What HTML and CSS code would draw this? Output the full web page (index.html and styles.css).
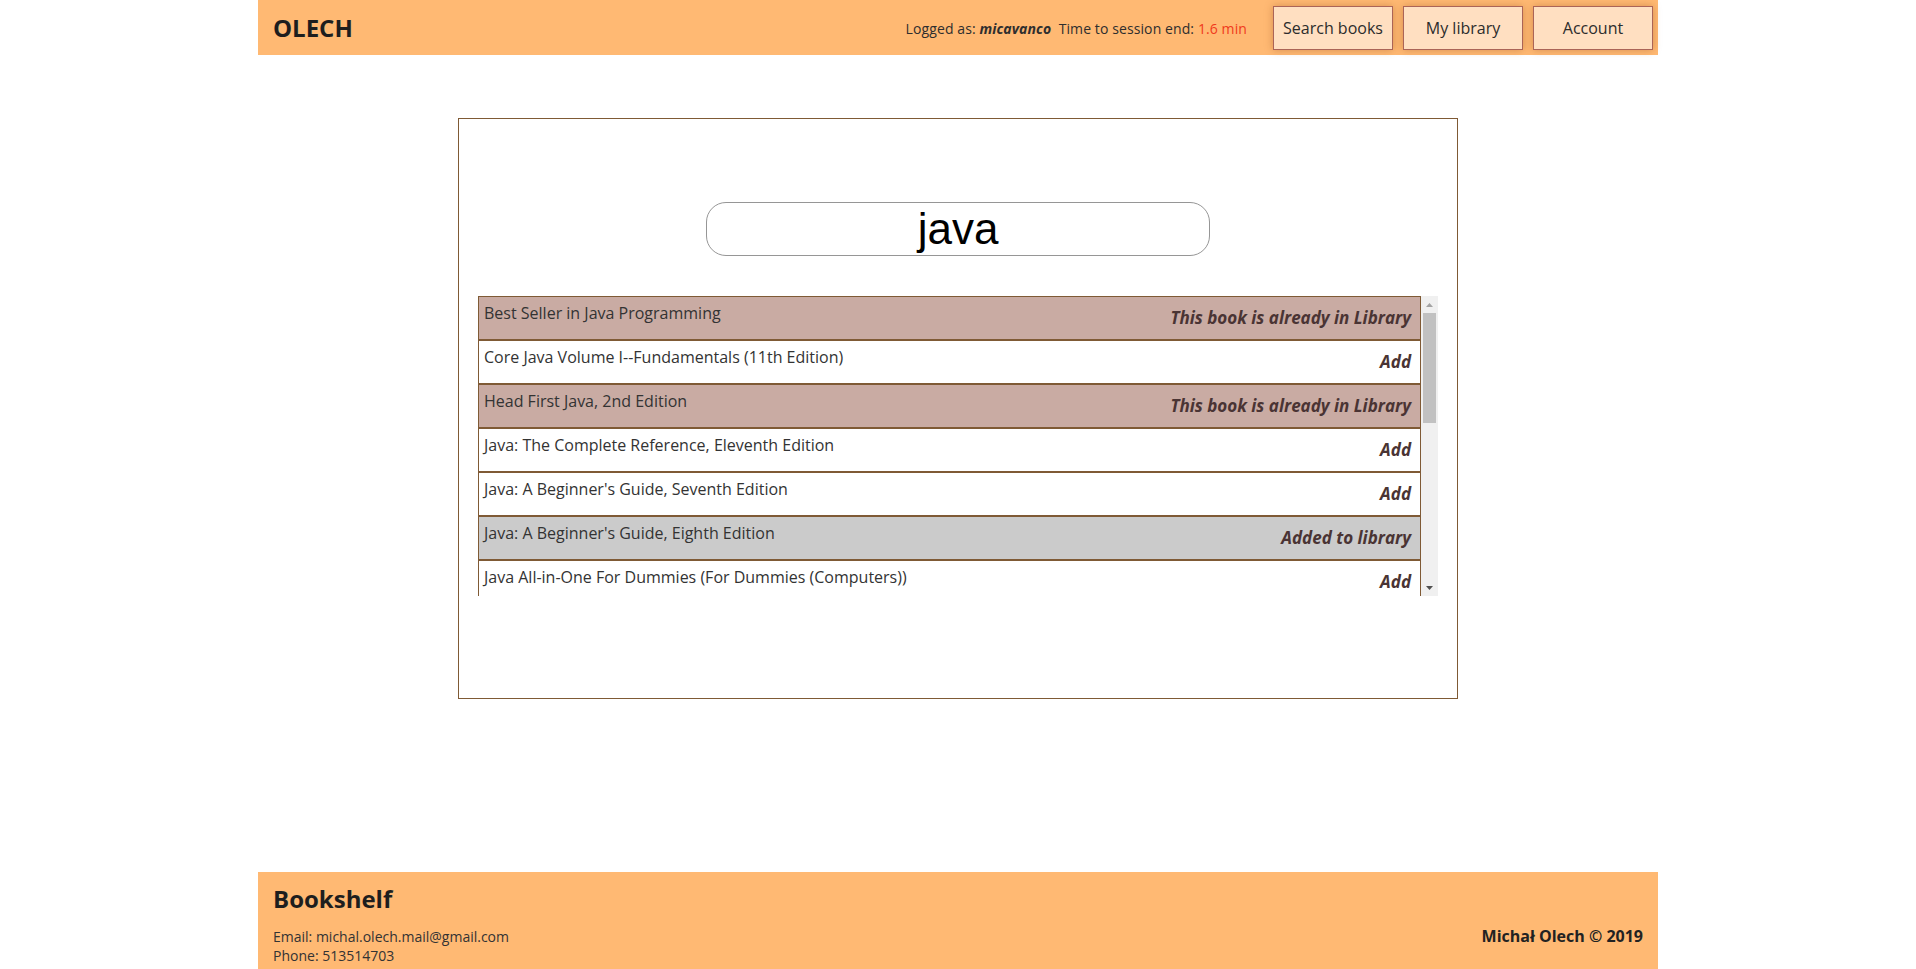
FILE: index.html
```html
<!DOCTYPE html>
<html lang="en">
<head>
<meta charset="utf-8">
<title>Bookshelf - Search books</title>
<link rel="stylesheet" href="styles.css">
</head>
<body>
<div class="page">
  <header class="topbar">
    <div class="logo">OLECH</div>
    <nav class="nav">
      <div class="session">Logged as: <b><i>micavanco</i></b>&nbsp; Time to session end: <span class="time">1.6 min</span></div>
      <button class="navbtn">Search books</button>
      <button class="navbtn">My library</button>
      <button class="navbtn">Account</button>
    </nav>
  </header>

  <main class="main">
    <section class="searchbox">
      <div class="search-input" role="searchbox">java</div>
      <div class="results">
        <ul class="list">
          <li class="row in-lib"><span class="title">Best Seller in Java Programming</span><span class="status">This book is already in Library</span></li>
          <li class="row"><span class="title">Core Java Volume I--Fundamentals (11th Edition)</span><span class="status">Add</span></li>
          <li class="row in-lib"><span class="title">Head First Java, 2nd Edition</span><span class="status">This book is already in Library</span></li>
          <li class="row"><span class="title">Java: The Complete Reference, Eleventh Edition</span><span class="status">Add</span></li>
          <li class="row"><span class="title">Java: A Beginner's Guide, Seventh Edition</span><span class="status">Add</span></li>
          <li class="row added"><span class="title">Java: A Beginner's Guide, Eighth Edition</span><span class="status">Added to library</span></li>
          <li class="row"><span class="title">Java All-in-One For Dummies (For Dummies (Computers))</span><span class="status">Add</span></li>
        </ul>
        <div class="scrollbar">
          <div class="sb-btn"><svg width="7" height="4" viewBox="0 0 7 4"><path d="M0 4 L3.5 0 L7 4 Z" fill="#a3a3a3"/></svg></div>
          <div class="thumb"></div>
          <div class="track"></div>
          <div class="sb-btn"><svg width="7" height="4" viewBox="0 0 7 4"><path d="M0 0 L7 0 L3.5 4 Z" fill="#505050"/></svg></div>
        </div>
      </div>
    </section>
  </main>

  <footer class="footer">
    <div class="footer-left">
      <h2 class="footer-title">Bookshelf</h2>
      <div class="contact">Email: michal.olech.mail@gmail.com</div>
      <div class="contact">Phone: 513514703</div>
    </div>
    <div class="copy">Michał Olech © 2019</div>
  </footer>
</div>
</body>
</html>
```

FILE: styles.css
```css
html, body {
  margin: 0;
  padding: 0;
  background: #ffffff;
}

body {
  font-family: "Open Sans", "DejaVu Sans", sans-serif;
  color: #222;
}

.page {
  width: 1400px;
  margin: 0 auto;
  min-height: 100vh;
  display: flex;
  flex-direction: column;
}

/* ---------- top bar ---------- */
.topbar {
  height: 55px;
  background: #ffb973;
  display: flex;
  align-items: center;
  justify-content: space-between;
  padding: 0 5px 0 15px;
  box-sizing: border-box;
}

.logo {
  font-size: 24px;
  font-weight: 700;
  color: #1e1e1e;
}

.nav {
  display: flex;
  align-items: center;
  gap: 10px;
}

.session {
  font-size: 14px;
  letter-spacing: 0.1px;
  color: #2e2e2e;
  margin-right: 16px;
  padding-top: 2px;
}

.session b {
  font-weight: 700;
}

.time {
  color: #f03a1c;
}

.navbtn {
  width: 120px;
  height: 44px;
  background: #ffdfc1;
  border: 1px solid #ab6457;
  font-family: "Open Sans", sans-serif;
  font-size: 16px;
  color: #2c2c2c;
  box-shadow: 0 0 8px rgba(150, 80, 30, 0.4);
  padding: 0;
  cursor: pointer;
}

/* ---------- main ---------- */
.main {
  flex: 1;
  padding-top: 63px;
}

.searchbox {
  width: 1000px;
  box-sizing: border-box;
  margin: 0 auto;
  border: 1px solid #7f5a35;
  padding: 83px 19px 102px;
}

.search-input {
  width: 504px;
  height: 54px;
  box-sizing: border-box;
  margin: 0 auto;
  border: 1px solid #969696;
  border-radius: 20px;
  font-family: "Liberation Sans", Arial, sans-serif;
  font-size: 44px;
  line-height: 52px;
  text-align: center;
  color: #000;
}

.results {
  margin-top: 40px;
  height: 300px;
  display: flex;
  overflow: hidden;
}

.list {
  flex: 1;
  list-style: none;
  margin: 0;
  padding: 0;
  overflow: hidden;
}

.row {
  height: 44px;
  box-sizing: border-box;
  border: 1px solid #7f5a35;
  display: flex;
  justify-content: space-between;
  padding: 0 9px 0 5px;
  background: #ffffff;
}

.row.in-lib {
  background: #c9aba3;
}

.row.added {
  background: #cbcbcb;
}

.title {
  font-size: 16px;
  color: #333;
  padding-top: 5px;
}

.status {
  font-size: 17px;
  font-weight: 700;
  font-style: italic;
  color: #4a3434;
  padding-top: 9px;
}

/* fake scrollbar */
.scrollbar {
  width: 17px;
  background: #f0f0f0;
  display: flex;
  flex-direction: column;
}

.sb-btn {
  height: 17px;
  display: flex;
  align-items: center;
  justify-content: center;
}

.thumb {
  height: 110px;
  margin: 0 2px;
  background: #c1c1c1;
}

.track {
  flex: 1;
}

/* ---------- footer ---------- */
.footer {
  background: #ffb973;
  display: flex;
  justify-content: space-between;
  align-items: flex-end;
  padding: 10px 15px 4px;
}

.footer-title {
  margin: 0 0 12px;
  font-size: 24px;
  font-weight: 700;
  color: #1e1e1e;
}

.contact {
  font-size: 14px;
  line-height: 19px;
  color: #333;
}

.copy {
  font-size: 16px;
  font-weight: 700;
  color: #222;
  margin-bottom: 18px;
}
```
